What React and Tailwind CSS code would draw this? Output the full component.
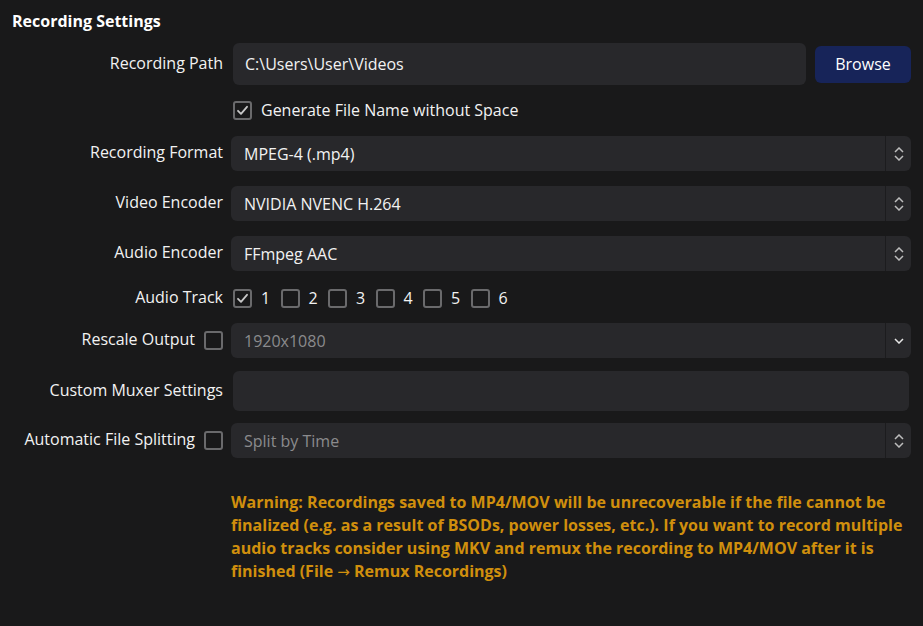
import React from "react";

const font = { fontFamily: "'Open Sans', 'Noto Sans', sans-serif" };

function Check({ checked }) {
  return (
    <div className="w-[19px] h-[19px] rounded-[3px] border-2 border-[#6a6a6c] flex items-center justify-center shrink-0">
      {checked && (
        <svg width="13" height="13" viewBox="0 0 13 13" fill="none">
          <path d="M2 6.8 L5 9.8 L11 2.8" stroke="#c8c8c8" strokeWidth="1.8" strokeLinecap="round" strokeLinejoin="round" />
        </svg>
      )}
    </div>
  );
}

function Spinner({ single }) {
  return (
    <div className="w-[26px] h-full border-l border-[#1c1c1e] flex flex-col items-center justify-center gap-[2px]">
      {!single && (
        <svg width="10" height="6" viewBox="0 0 10 6" fill="none">
          <path d="M1 5 L5 1 L9 5" stroke="#bdbdbd" strokeWidth="1.5" />
        </svg>
      )}
      <svg width="10" height="6" viewBox="0 0 10 6" fill="none">
        <path d="M1 1 L5 5 L9 1" stroke={single ? "#e6e6e6" : "#bdbdbd"} strokeWidth="1.5" />
      </svg>
    </div>
  );
}

function Select({ value, muted, single }) {
  return (
    <div className="h-full flex-1 flex items-center bg-[#28282b] rounded-[6px]">
      <div className={"flex-1 pl-[13px] text-[16px] " + (muted ? "text-[#8b8b8d]" : "text-[#f2f2f2]")}>{value}</div>
      <Spinner single={single} />
    </div>
  );
}

function Row({ label, check, className, children }) {
  return (
    <div className={"flex items-center " + className}>
      <div className="w-[223px] shrink-0 flex items-center justify-end gap-[9px] text-[16px] text-[#f2f2f2]">
        {label && <span className="-mt-[3px]">{label}</span>}
        {check !== undefined && <Check checked={check} />}
      </div>
      <div className="flex-1 h-full flex items-center ml-[8px]">{children}</div>
    </div>
  );
}

export default function App() {
  return (
    <div className="w-[923px] h-[626px] bg-[#19191a] pr-[12px] flex flex-col" style={font}>
      <div className="pl-[12px] pt-[10px] h-[31px] text-[16px] leading-[22px] font-bold text-white">Recording Settings</div>
      <Row label="Recording Path" className="mt-[12px] h-[42px]">
        <div className="ml-[2px] flex-1 h-full bg-[#28282b] rounded-[6px] flex items-center pl-[12px] text-[16px] text-[#f2f2f2]">C:\Users\User\Videos</div>
        <div className="ml-[9px] w-[96px] h-[37px] bg-[#172459] rounded-[6px] flex items-center justify-center text-[16px] text-white">Browse</div>
      </Row>
      <Row className="mt-[13px] h-[24px]">
        <div className="ml-[2px] flex items-center gap-[9px] text-[16px] text-[#f2f2f2]">
          <Check checked />
          <span>Generate File Name without Space</span>
        </div>
      </Row>
      <Row label="Recording Format" className="mt-[14px] h-[35px]">
        <Select value="MPEG-4 (.mp4)" />
      </Row>
      <Row label="Video Encoder" className="mt-[15px] h-[35px]">
        <Select value="NVIDIA NVENC H.264" />
      </Row>
      <Row label="Audio Encoder" className="mt-[15px] h-[35px]">
        <Select value="FFmpeg AAC" />
      </Row>
      <Row label="Audio Track" className="mt-[15px] h-[24px]">
        <div className="ml-[2px] flex items-center text-[16px] text-[#f2f2f2]">
          {[1, 2, 3, 4, 5, 6].map((n) => (
            <div key={n} className="flex items-center gap-[9px] w-[47.5px]">
              <Check checked={n === 1} />
              <span>{n}</span>
            </div>
          ))}
        </div>
      </Row>
      <Row label="Rescale Output" check={false} className="mt-[13px] h-[35px]">
        <Select value="1920x1080" muted single />
      </Row>
      <Row label="Custom Muxer Settings" className="mt-[13px] h-[40px]">
        <div className="ml-[2px] mr-[2px] flex-1 h-full bg-[#28282b] rounded-[6px]" />
      </Row>
      <Row label="Automatic File Splitting" check={false} className="mt-[12px] h-[35px]">
        <Select value="Split by Time" muted />
      </Row>
      <div className="mt-[33px] ml-[231px] text-[16px] leading-[23px] font-bold text-[#d08f0d]">
        Warning: Recordings saved to MP4/MOV will be unrecoverable if the file cannot be finalized (e.g. as a result of BSODs, power losses, etc.). If you want to record multiple audio tracks consider using MKV and remux the recording to MP4/MOV after it is finished (File{" "}
        <span className="font-normal text-[15px]" style={{ fontFamily: "'DejaVu Sans', sans-serif" }}>→</span>{" "}
        Remux Recordings)
      </div>
    </div>
  );
}
